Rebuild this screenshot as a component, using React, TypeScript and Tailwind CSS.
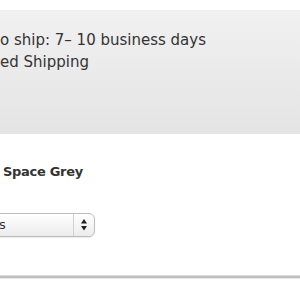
export default function App() {
  return (
    <div className="w-[300px] h-[300px] bg-white overflow-hidden text-[#333] font-['Lucida_Grande','DejaVu_Sans',sans-serif]">
      <div className="h-[10px]" />
      <div className="h-[124px] bg-gradient-to-b from-[#f1f1f1] to-[#e4e4e4] pt-[19px] text-[15px] leading-[22px]">
        <p className="whitespace-nowrap">o ship: 7– 10 business days</p>
        <p className="whitespace-nowrap">ed Shipping</p>
      </div>
      <div className="pt-[28px] pl-[3px] text-[13px] font-bold leading-[20px] tracking-[-0.3px]">Space Grey</div>
      <div className="mt-[31px] flex">
        <div className="-ml-[6px] w-[101px] h-[24px] rounded-r-[6px] border border-[#bdbdbd] bg-gradient-to-b from-white to-[#ececec] flex items-center shadow-[0_1px_1px_rgba(0,0,0,0.08)]">
          <span className="pl-[4px] text-[13px] flex-1">s</span>
          <div className="w-px h-full bg-[#d0d0d0]" />
          <svg width="20" height="22" viewBox="0 0 20 22" className="shrink-0">
            <path d="M10 5 L13 9.5 L7 9.5 Z" fill="#222" />
            <path d="M10 16.5 L13 12 L7 12 Z" fill="#222" />
          </svg>
        </div>
      </div>
      <div className="mt-[38px] h-[1px] bg-[#dcdcdc]" />
      <div className="h-[2px] bg-[#bfbfbf]" />
      <div className="h-[1px] bg-[#e8e8e8]" />
    </div>
  );
}
